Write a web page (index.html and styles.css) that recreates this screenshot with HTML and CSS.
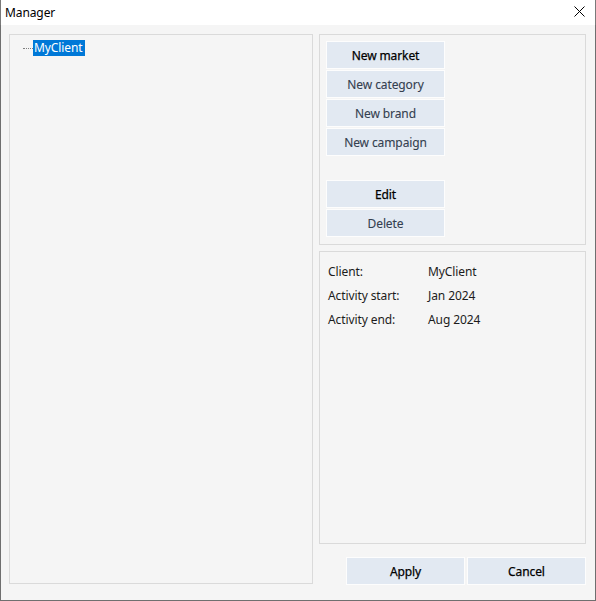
FILE: index.html
```html
<!DOCTYPE html>
<html>
<head>
<meta charset="utf-8">
<link rel="stylesheet" href="styles.css">
</head>
<body>
<div class="window">
  <div class="titlebar">
    <span class="title">Manager</span>
    <svg class="close" width="11" height="11" viewBox="0 0 11 11"><path d="M0.5 0.5 L10.5 10.5 M10.5 0.5 L0.5 10.5" stroke="#000" stroke-width="1" fill="none"/></svg>
  </div>
  <div class="body">
    <div class="tree">
      <div class="node"><span class="dots"></span><span class="node-label">MyClient</span></div>
    </div>
    <div class="side">
      <div class="panel actions">
        <button class="btn btn-default">New market</button>
        <button class="btn">New category</button>
        <button class="btn">New brand</button>
        <button class="btn">New campaign</button>
        <div class="spacer"></div>
        <button class="btn btn-default">Edit</button>
        <button class="btn">Delete</button>
      </div>
      <div class="panel info">
        <span class="k">Client:</span><span class="v">MyClient</span>
        <span class="k">Activity start:</span><span class="v">Jan 2024</span>
        <span class="k">Activity end:</span><span class="v">Aug 2024</span>
      </div>
      <div class="footer">
        <button class="btn btn-default btn-foot">Apply</button>
        <button class="btn btn-default btn-foot">Cancel</button>
      </div>
    </div>
  </div>
</div>
</body>
</html>
```
FILE: styles.css
```css
* { box-sizing: border-box; }
html, body { margin: 0; padding: 0; }
body {
  font-family: "Noto Sans", "Open Sans", sans-serif;
  font-size: 12px;
  letter-spacing: -0.1px;
  background: #fff;
}
.window {
  width: 596px;
  height: 601px;
  display: flex;
  flex-direction: column;
}
.titlebar {
  height: 25px;
  background: #fff;
  display: flex;
  align-items: center;
  justify-content: space-between;
  padding: 0 10px 0 4px;
  border-left: 1px solid #7a7a7a;
  border-right: 1px solid #7a7a7a;
}
.title { color: #000; font-size: 12px; line-height: 25px; }
.close { display: block; margin-top: -2px; }
.body {
  height: 576px;
  background: #f5f5f5;
  border: 1px solid #6f6f6f;
  border-top: none;
  padding: 9px 9px 0 8px;
  display: flex;
  gap: 6px;
}
.tree {
  width: 304px;
  height: 550px;
  border: 1px solid #dadada;
  padding: 5px 0 0 13px;
}
.node { display: flex; align-items: center; height: 16px; }
.dots {
  width: 10px;
  height: 0;
  border-top: 1px dotted #7f7f7f;
}
.node-label {
  background: #0078d7;
  color: #fff;
  height: 16px;
  line-height: 16px;
  padding: 0 2px 0 1px;
}
.side {
  width: 267px;
  display: flex;
  flex-direction: column;
}
.panel { border: 1px solid #dadada; }
.actions {
  height: 211px;
  padding: 6px 0 0 6px;
  display: flex;
  flex-direction: column;
  align-items: flex-start;
}
.spacer { height: 23px; flex: none; }
.btn {
  width: 119px;
  height: 28px;
  border: 1px solid #fdfdfd;
  background: #e2e9f2;
  color: #34404f;
  -webkit-text-stroke: 0.1px #34404f;
  font-family: inherit;
  font-size: 12px;
  letter-spacing: -0.1px;
  padding: 0;
  margin: 0 0 1px 0;
  flex: none;
}
.btn-default { color: #000; -webkit-text-stroke: 0.25px #000; }
.info {
  margin-top: 6px;
  height: 293px;
  padding: 7px 0 0 8px;
  display: grid;
  grid-template-columns: 100px 1fr;
  grid-auto-rows: 24px;
  align-content: start;
  align-items: center;
  color: #1c1c1c;
}
.footer {
  margin-top: 13px;
  display: flex;
  justify-content: flex-end;
  gap: 2px;
}
.btn-foot { margin: 0; }
```
